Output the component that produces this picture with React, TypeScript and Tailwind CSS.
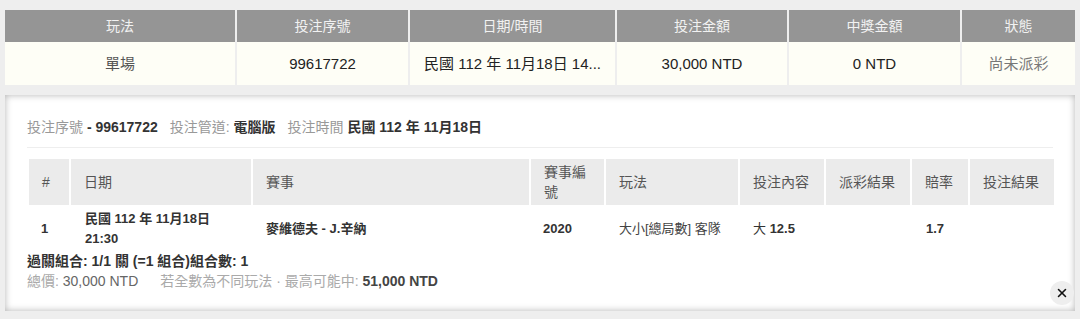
import { X } from 'lucide-react';

type SummaryCell = {
    label: string;
    value: string;
    width: string;
    tone?: string;
};

const summary: SummaryCell[] = [
    { label: '玩法', value: '單場', width: 'w-[230px]', tone: 'text-[#555]' },
    { label: '投注序號', value: '99617722', width: 'w-[171px]' },
    { label: '日期/時間', value: '民國 112 年 11月18日 14...', width: 'w-[205px]' },
    { label: '投注金額', value: '30,000 NTD', width: 'w-[170px]' },
    { label: '中獎金額', value: '0 NTD', width: 'w-[171px]' },
    { label: '狀態', value: '尚未派彩', width: 'w-[113px]', tone: 'text-[#777]' },
];

const detailCols = [
    { label: '#', width: 'w-[40px]' },
    { label: '日期', width: 'w-[180px]' },
    { label: '賽事', width: 'w-[276px]' },
    { label: '賽事編號', width: 'w-[73px]' },
    { label: '玩法', width: 'w-[132px]' },
    { label: '投注內容', width: 'w-[84px]' },
    { label: '派彩結果', width: 'w-[84px]' },
    { label: '賠率', width: 'w-[56px]' },
    { label: '投注結果', width: 'w-[84px]' },
];

const BetDetail = () => {
    return (
        <div className="relative h-[216px] mt-[10px] bg-white shadow-[inset_0_0_7px_rgba(0,0,0,0.3)] px-[22px] pt-[24px]">
            {/* Header info */}
            <div className="pb-[12px] border-b border-[#eee] text-[14px] leading-[16px] text-[#999] flex gap-[12px]">
                <span>
                    投注序號 <span className="font-bold text-[#333]">- 99617722</span>
                </span>
                <span>
                    投注管道: <span className="font-bold text-[#333]">電腦版</span>
                </span>
                <span>
                    投注時間 <span className="font-bold text-[#333]">民國 112 年 11月18日</span>
                </span>
            </div>

            {/* Matches */}
            <div className="mt-[9px] px-[2px] text-[13px]">
                <div className="flex gap-[2px] py-[2px] text-[14px]">
                    {detailCols.map((col) => (
                        <div
                            key={col.label}
                            className={`${col.width} h-[46px] shrink-0 bg-[#ebebeb] text-[#555] pl-[13px] pr-[12px] flex items-center leading-[20px]`}>
                            {col.label}
                        </div>
                    ))}
                </div>
                <div className="flex gap-[2px] text-[#333] leading-[20px]">
                    <div className="w-[40px] h-[44px] shrink-0 pl-[12px] flex items-center font-bold">1</div>
                    <div className="w-[180px] shrink-0 pl-[14px] flex items-center font-bold">
                        民國 112 年 11月18日
                        <br />
                        21:30
                    </div>
                    <div className="w-[276px] shrink-0 pl-[13px] flex items-center font-bold">麥維德夫 - J.辛納</div>
                    <div className="w-[73px] shrink-0 pl-[12px] flex items-center font-bold">2020</div>
                    <div className="w-[132px] shrink-0 pl-[13px] flex items-center text-[#444]">大小[總局數] 客隊</div>
                    <div className="w-[84px] shrink-0 pl-[13px] flex items-center">
                        大&nbsp;<span className="font-bold">12.5</span>
                    </div>
                    <div className="w-[84px] shrink-0" />
                    <div className="w-[56px] shrink-0 pl-[14px] flex items-center font-bold">1.7</div>
                    <div className="w-[84px] shrink-0" />
                </div>
            </div>

            {/* Totals */}
            <div className="text-[14px] leading-[20px]">
                <div className="font-bold text-[#333]">過關組合: 1/1 關 (=1 組合)組合數: 1</div>
                <div className="text-[#aaa] flex gap-[22px]">
                    <span>
                        總價: <span className="text-[#666]">30,000 NTD</span>
                    </span>
                    <span>
                        若全數為不同玩法 · 最高可能中: <span className="font-bold text-[#444]">51,000 NTD</span>
                    </span>
                </div>
            </div>

            <button className="absolute right-[1px] bottom-[6px] w-[24px] h-[24px] rounded-full bg-[#eee] flex items-center justify-center text-[#111]">
                <X size={14} strokeWidth={2.6} />
            </button>
        </div>
    );
};

export default function App() {
    return (
        <div
            className="h-[319px] bg-[#eeeeee] px-[5px] pt-[10px] overflow-hidden"
            style={{ fontFamily: '"Liberation Sans", "Noto Sans CJK TC", sans-serif' }}>
            {/* Bet summary */}
            <div className="flex gap-[2px]">
                {summary.map((cell) => (
                    <div key={cell.label} className={`${cell.width} shrink-0 flex flex-col`}>
                        <div className="h-[32px] bg-[#959595] text-[#f2f2f2] text-[14px] flex items-center justify-center">
                            {cell.label}
                        </div>
                        <div
                            className={`h-[43px] bg-[#fefef6] px-[6px] text-[15px] leading-[43px] text-center whitespace-nowrap ${cell.tone ?? 'text-[#222]'}`}>
                            {cell.value}
                        </div>
                    </div>
                ))}
            </div>

            <BetDetail />
        </div>
    );
}
